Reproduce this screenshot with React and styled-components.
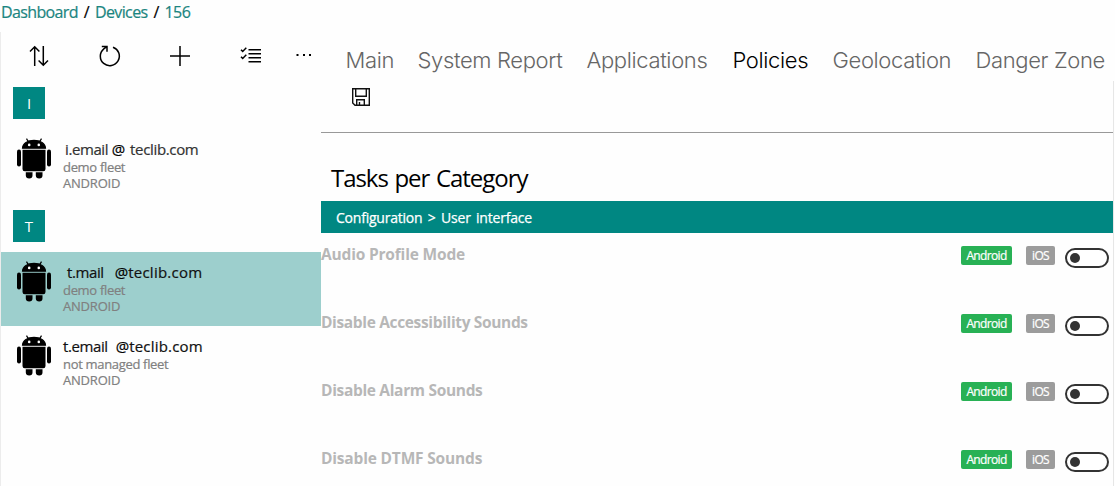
import React from 'react';
import styled, { createGlobalStyle } from 'styled-components';

const GlobalStyle = createGlobalStyle`
  * { box-sizing: border-box; }
  body {
    margin: 0;
    background: #fefefe;
    color: #000;
    font-family: "Open Sans", "Noto Sans", sans-serif;
    overflow: hidden;
  }
`;

const Page = styled.div`
  width: 1115px;
  height: 486px;
  overflow: hidden;
  display: flex;
  flex-direction: column;
`;

const Breadcrumb = styled.nav`
  height: 32px;
  flex: none;
  padding: 1px 0 0 1px;
  font-size: 16px;
  -webkit-text-stroke: 0.2px;
  line-height: 22px;
  letter-spacing: -0.63px;
  word-spacing: 2.4px;
  white-space: pre;
`;

const Crumb = styled.a`
  color: #1b8580;
`;

const Columns = styled.div`
  display: flex;
  flex: 1;
  min-height: 0;
`;

const Sidebar = styled.aside`
  width: 321px;
  flex: none;
  border-left: 1px solid #ececec;
`;

const Toolbar = styled.div`
  display: flex;
  height: 48px;
  padding-left: 26px;
  gap: 46.5px;
  align-items: center;
`;

const Tool = styled.button`
  width: 24px;
  height: 24px;
  flex: none;
  padding: 0;
  border: 0;
  background: none;
  display: grid;
  place-items: center;

  &:last-child {
    margin-left: -17px;
  }
`;

const GroupHeader = styled.div`
  padding: 7px 0 10px 12px;
`;

const GroupLetter = styled.div`
  width: 32px;
  height: 32px;
  display: grid;
  place-items: center;
  background: #008782;
  color: #fff;
  font-size: 15px;
`;

const Device = styled.div`
  display: flex;
  height: 74px;
  padding: 9px 0 0 16px;
  gap: 12px;
  background: ${(p) => (p.$active ? '#9dcfcd' : 'transparent')};
`;

const DeviceInfo = styled.div`
  display: flex;
  flex-direction: column;
`;

const Email = styled.div`
  display: flex;
  height: 21px;
  align-items: baseline;
  font-size: 15px;
  -webkit-text-stroke: 0.2px;
  line-height: 22px;
  white-space: pre;
`;

const MailPart = styled.span`
  margin-left: ${(p) => p.$gap || 0}px;
  letter-spacing: ${(p) => p.$track || 0}px;
  color: ${(p) => p.$color || '#111'};
`;

const Meta = styled.div`
  height: 16px;
  font-size: 13px;
  -webkit-text-stroke: 0.2px;
  line-height: 16px;
  color: #808080;
  letter-spacing: ${(p) => p.$track || 0}px;
`;

const Content = styled.main`
  flex: 1;
  min-width: 0;
  display: flex;
  flex-direction: column;
`;

const Tabs = styled.nav`
  display: flex;
  height: 49px;
  flex: none;
  padding: 11px 0 0 24.5px;
  gap: 24px;
  font-family: Inter, "Liberation Sans", sans-serif;
  font-weight: 300;
  font-size: 22px;
  line-height: 34px;
  letter-spacing: -0.36px;
`;

const Tab = styled.a`
  width: ${(p) => p.$width}px;
  flex: none;
  white-space: nowrap;
  color: ${(p) => (p.$active ? '#000' : '#666')};
`;

const Panel = styled.section`
  width: 793px;
  flex: 1;
  border-right: 1px solid #e6e6e6;
`;

const PanelTools = styled.div`
  height: 52px;
  padding: 7px 0 0 31px;
  border-bottom: 1px solid #999;
`;

const Title = styled.h2`
  margin: 0;
  height: 68px;
  padding: 28px 0 0 10px;
  font-size: 24px;
  font-weight: 400;
  line-height: 34px;
  letter-spacing: -1.05px;
  word-spacing: 1.5px;
`;

const Category = styled.div`
  height: 32px;
  padding-left: 15px;
  background: #008782;
  color: #fff;
  font-size: 14px;
  -webkit-text-stroke: 0.25px;
  line-height: 33px;
  letter-spacing: -0.22px;
  word-spacing: 2px;
`;

const Task = styled.div`
  display: flex;
  height: 68px;
  padding: 13px 4px 0 0;
  align-items: flex-start;
`;

const TaskName = styled.div`
  flex: 1;
  margin-top: -3px;
  font-size: 15.5px;
  font-weight: 700;
  line-height: 22px;
  color: #b7b7b7;
  letter-spacing: ${(p) => p.$track}px;
`;

const Badge = styled.span`
  width: ${(p) => p.$width}px;
  height: 19px;
  margin-right: ${(p) => p.$after}px;
  border-radius: 2px;
  background: ${(p) => p.$color};
  color: #fff;
  font-size: 12px;
  -webkit-text-stroke: 0.2px;
  line-height: 20px;
  text-align: center;
  letter-spacing: -0.65px;
`;

const Switch = styled.span`
  width: 44px;
  height: 20px;
  margin-top: 2px;
  padding: 3px;
  border: 2px solid #333;
  border-radius: 10px;
  background: #fff;
`;

const Knob = styled.span`
  display: block;
  width: 10px;
  height: 10px;
  border-radius: 50%;
  background: #333;
`;

const Robot = () => (
  <svg width="34" height="41" viewBox="0 0 34 41">
    <path d="M5.500 10.200C5.800 5.500 10.500 2.400 17 2.400s11.200 3.100 11.500 7.800zM11.500 4 9.500.6M22.500 4 24.500.6" stroke="#000" strokeWidth="1.200" />
    <circle cx="12.200" cy="6.900" r="1.300" fill="#fff" />
    <circle cx="21.800" cy="6.900" r="1.300" fill="#fff" />
    <rect x="0" y="11.500" width="4" height="17" rx="2" />
    <rect x="30" y="11.500" width="4" height="17" rx="2" />
    <path d="M5.500 11.800h23v19.200q0 2.300-2.300 2.300H7.800q-2.300 0-2.300-2.300zM8.800 34.300h6.700v3.200q0 3-3.300 3t-3.400-3zM18.800 34.300h6.700v3.200q0 3-3.300 3t-3.400-3z" />
  </svg>
);

const line = { fill: 'none', stroke: '#000', strokeWidth: 1.5 };

const SortIcon = () => (
  <svg width="20" height="22" viewBox="0 0 20 22" {...line}>
    <path d="M5.700 21V2M1 6.500 5.700 1.800 10.400 6.500M14.300 1v19M9.600 15.500l4.700 4.700 4.700-4.700" />
  </svg>
);
const RefreshIcon = () => (
  <svg width="22" height="22" viewBox="0 0 22 22" {...line}>
    <path d="M14 2.200A9.500 9.500 0 1 1 4.800 3.800L7.800 1.700M2.800 1.600h5.200v5.200" />
  </svg>
);
const PlusIcon = () => (
  <svg width="22" height="22" viewBox="0 0 22 22" {...line}>
    <path d="M11 1v20M1 11h20" />
  </svg>
);
const ChecklistIcon = () => (
  <svg width="22" height="22" viewBox="0 0 22 22" {...line}>
    <path d="M8.500 4.700H21M8.500 8.700H21M8.500 12.700H21M8.500 16.700H21" />
    <path d="M1 4.700 2.700 6.400 6.300 2.700M1 11.700l1.700 1.700 3.600-3.700" />
  </svg>
);
const MoreIcon = () => (
  <svg width="16" height="6" viewBox="0 0 16 6">
    <rect x="0.500" y="1" width="2" height="2" />
    <rect x="7" y="1" width="2" height="2" />
    <rect x="13" y="1" width="2" height="2" />
  </svg>
);
const SaveIcon = () => (
  <svg width="18" height="18" viewBox="0 0 18 18" fill="none" stroke="#111" strokeWidth="1.400">
    <path d="M.7.7h16.600v16.600H3L.7 15zM3.700.7v7.600h10.600V.7M4.700 17.300v-5.600h7.600v5.600M7.500 17v-3" />
  </svg>
);

const tools = [SortIcon, RefreshIcon, PlusIcon, ChecklistIcon, MoreIcon];

const groups = [
  {
    letter: 'I',
    devices: [
      { name: 'i.email', nameGap: 2, at: '@', atGap: 3.5, domain: 'teclib.com', domainGap: 5, domainTrack: -0.35, fleet: 'demo fleet', color: '#333' },
    ],
  },
  {
    letter: 'T',
    devices: [
      { name: 't.mail', nameGap: 4, at: '@', atGap: 11, domain: 'teclib.com', domainGap: 0, domainTrack: 0.25, fleet: 'demo fleet', active: true },
      { name: 't.email', nameGap: 0, at: '@', atGap: 8, domain: 'teclib.com', domainGap: 0, domainTrack: 0.2, fleet: 'not managed fleet' },
    ],
  },
];

const tabs = [
  { label: 'Main', width: 48 },
  { label: 'System Report', width: 145 },
  { label: 'Applications', width: 122 },
  { label: 'Policies', width: 76, active: true },
  { label: 'Geolocation', width: 119 },
  { label: 'Danger Zone', width: 130 },
];

const tasks = [
  { name: 'Audio Profile Mode', track: -0.18 },
  { name: 'Disable Accessibility Sounds', track: -0.35 },
  { name: 'Disable Alarm Sounds', track: -0.33 },
  { name: 'Disable DTMF Sounds', track: -0.18 },
];

export default function App() {
  return (
    <Page>
      <GlobalStyle />
      <Breadcrumb>
        <Crumb>Dashboard</Crumb> / <Crumb>Devices</Crumb> / <Crumb>156</Crumb>
      </Breadcrumb>
      <Columns>
        <Sidebar>
          <Toolbar>
            {tools.map((Icon, i) => (
              <Tool key={i}><Icon /></Tool>
            ))}
          </Toolbar>
          {groups.map((g) => (
            <React.Fragment key={g.letter}>
              <GroupHeader><GroupLetter>{g.letter}</GroupLetter></GroupHeader>
              {g.devices.map((d) => (
                <Device key={d.name} $active={d.active}>
                  <Robot />
                  <DeviceInfo>
                    <Email>
                      <MailPart $gap={d.nameGap} $color={d.color} $track={-0.4}>{d.name}</MailPart>
                      <MailPart $gap={d.atGap} $color="#000">{d.at}</MailPart>
                      <MailPart $gap={d.domainGap} $color={d.color} $track={d.domainTrack}>{d.domain}</MailPart>
                    </Email>
                    <Meta $track={-0.32}>{d.fleet}</Meta>
                    <Meta $track={-0.2}>ANDROID</Meta>
                  </DeviceInfo>
                </Device>
              ))}
            </React.Fragment>
          ))}
        </Sidebar>
        <Content>
          <Tabs>
            {tabs.map((t) => (
              <Tab key={t.label} $width={t.width} $active={t.active}>{t.label}</Tab>
            ))}
          </Tabs>
          <Panel>
            <PanelTools><SaveIcon /></PanelTools>
            <Title>Tasks per Category</Title>
            <Category>Configuration &gt; User interface</Category>
            {tasks.map((t) => (
              <Task key={t.name}>
                <TaskName $track={t.track}>{t.name}</TaskName>
                <Badge $width={51} $after={14} $color="#28b155">Android</Badge>
                <Badge $width={29} $after={10} $color="#9c9c9c">iOS</Badge>
                <Switch><Knob /></Switch>
              </Task>
            ))}
          </Panel>
        </Content>
      </Columns>
    </Page>
  );
}
